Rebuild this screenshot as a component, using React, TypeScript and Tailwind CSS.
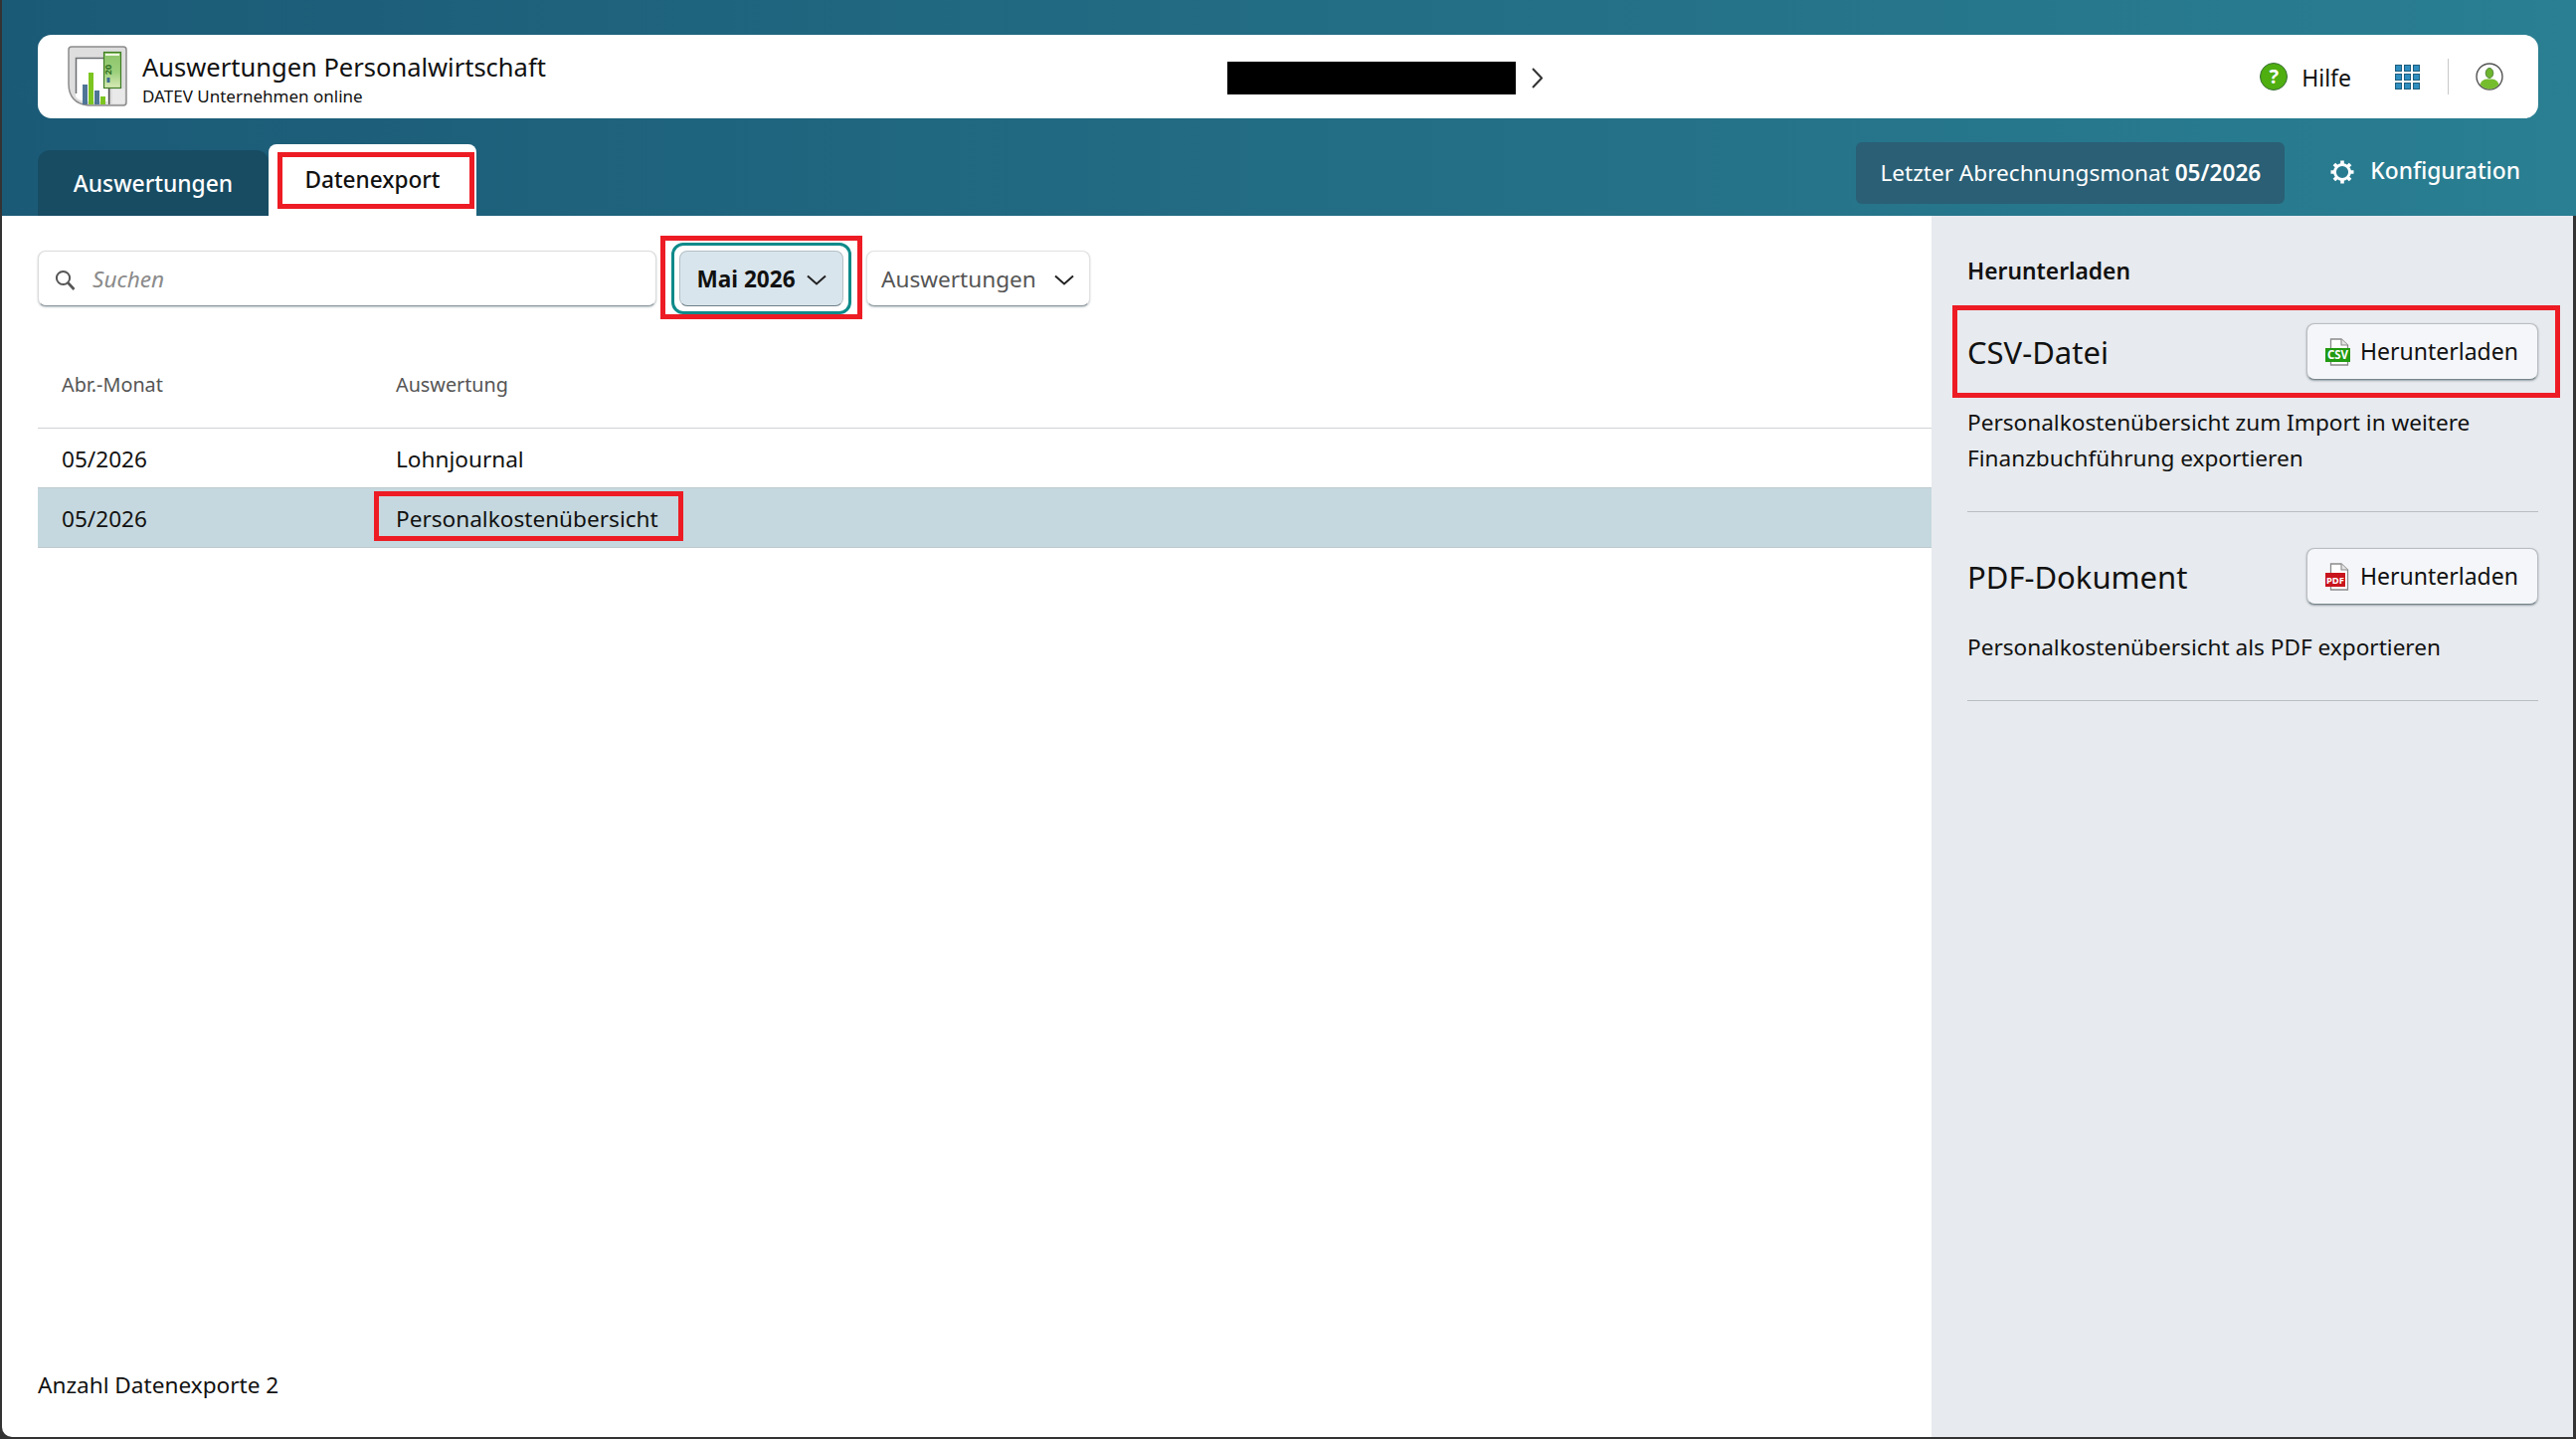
function AppLogo() {
  return (
    <svg viewBox="0 0 62 62" className="w-[62px] h-[62px] shrink-0">
      <defs>
        <linearGradient id="noteFill" x1="0" y1="0" x2="0" y2="1">
          <stop offset="0" stopColor="#8cc46a" />
          <stop offset="0.55" stopColor="#9ccf7a" />
          <stop offset="1" stopColor="#d8eab8" />
        </linearGradient>
      </defs>
      <path d="M4 1 H56 Q59 1 59 4 V57 Q59 60 56 60 H21 Q1 58 1 38 V4 Q1 1 4 1 Z" fill="#dedede" stroke="#8c8c8c" strokeWidth="1.5" />
      <path d="M8 50 V12 H40 V56 H20 Q8 55 8 50 Z" fill="#ffffff" />
      <path d="M8.5 48 V12.5 H38" fill="none" stroke="#6b6f72" strokeWidth="1.5" />
      <rect x="45" y="43" width="12" height="15" fill="#e9e9e9" />
      <rect x="15" y="39" width="5" height="20" fill="#4f7596" />
      <rect x="21" y="27" width="5" height="32" fill="#7cc520" />
      <rect x="27" y="45" width="5" height="14" fill="#4f7596" />
      <rect x="33" y="51" width="5" height="8" fill="#7cc520" />
      <rect x="41" y="42" width="1.5" height="17" fill="#555" />
      <rect x="36.5" y="6.5" width="17" height="36" fill="url(#noteFill)" stroke="#3f7d25" strokeWidth="1.2" />
      <rect x="38" y="8" width="14" height="2" fill="#eef6e2" />
      <text x="0" y="0" transform="translate(44 24) rotate(-90)" fontSize="9" fontWeight="700" fill="#2f6f1f" textAnchor="middle" fontFamily="Noto Sans, sans-serif">20</text>
      <rect x="39.5" y="32" width="3" height="5" fill="#3d6a92" />
    </svg>
  )
}

function HelpIcon() {
  return (
    <span className="w-7 h-7 rounded-full bg-[#4fae10] border border-[#3b6e3a] flex items-center justify-center text-white text-[20px] leading-none font-bold">?</span>
  )
}

function AppsIcon() {
  const cells = [0, 9, 18].flatMap((y) => [0, 9, 18].map((x) => [x, y]))
  return (
    <svg viewBox="0 0 25 25" className="w-[25px] h-[25px]">
      {cells.map(([x, y]) => (
        <rect key={`${x}-${y}`} x={x + 0.5} y={y + 0.5} width="6" height="6" fill="#2f8ec0" stroke="#1d5e7e" />
      ))}
    </svg>
  )
}

function UserIcon() {
  return (
    <svg viewBox="0 0 28 28" className="w-7 h-7">
      <circle cx="14" cy="14" r="13" fill="#fff" stroke="#555" strokeWidth="1.4" />
      <ellipse cx="14" cy="10.5" rx="3.8" ry="5" fill="#6db52e" stroke="#3f6e2a" strokeWidth="0.8" />
      <path d="M4.5 22 Q6 17 11 16.5 H17 Q22 17 23.5 22 Q19.5 26.5 14 26.5 Q8.5 26.5 4.5 22 Z" fill="#76bd2e" />
    </svg>
  )
}

function GearIcon() {
  return (
    <svg viewBox="0 0 24 24" className="w-6 h-6 text-white" fill="none" stroke="currentColor">
      <circle cx="12" cy="12" r="7.5" strokeWidth="2.8" />
      <path d="M12 0.5V5M12 19V23.5M0.5 12H5M19 12H23.5M3.9 3.9L7 7M17 17L20.1 20.1M3.9 20.1L7 17M17 7L20.1 3.9" strokeWidth="3.6" />
    </svg>
  )
}

function SearchIcon() {
  return (
    <svg viewBox="0 0 21 21" className="w-[21px] h-[21px] text-[#555]" fill="none" stroke="currentColor">
      <circle cx="8.5" cy="8.5" r="6.6" strokeWidth="2" />
      <path d="M13.5 13.5L19.5 20" strokeWidth="2.6" />
    </svg>
  )
}

function Chevron() {
  return (
    <svg viewBox="0 0 20 11" className="w-5 h-[11px] text-[#222]" fill="none" stroke="currentColor" strokeWidth="2">
      <path d="M1 1.5L10 9.5L19 1.5" />
    </svg>
  )
}

function FileIcon({ label, color, band, size }: { label: string; color: string; band: number; size: number }) {
  return (
    <svg viewBox="0 0 25 28" className="w-[25px] h-7 shrink-0">
      <path d="M5.5 1H16L22.5 7V27H5.5Z" fill="#fff" stroke="#8a8a8a" strokeWidth="1.3" />
      <path d="M16 1V7H22.5" fill="#e4e4e4" stroke="#8a8a8a" strokeWidth="1.1" />
      <rect x="0" y="10" width={band} height="14" fill={color} />
      <text x={band / 2} y="21" fontSize={size} fontWeight="700" fill="#fff" textAnchor="middle" fontFamily="Noto Sans, sans-serif">{label}</text>
    </svg>
  )
}

function DownloadButton({ label, color, band, size }: { label: string; color: string; band: number; size: number }) {
  return (
    <button className="w-[233px] h-[57px] shrink-0 flex items-center gap-[10px] pl-[18px] rounded-lg border border-[#b9bdc1] border-b-[#77858b] bg-[#f5f6f9] shadow-[0_1px_2px_rgba(70,90,100,0.5)] text-[23px] text-[#111]">
      <FileIcon label={label} color={color} band={band} size={size} />
      Herunterladen
    </button>
  )
}

function DownloadSection({ title, label, color, band, size, marked, children }: { title: string; label: string; color: string; band: number; size: number; marked?: boolean; children: React.ReactNode }) {
  return (
    <section className="mt-9 border-b border-[#b9bec2] pb-[35px]">
      <div className="relative flex items-center justify-between">
        <h3 className="text-[31px] leading-[44px] text-[#111]">{title}</h3>
        <DownloadButton label={label} color={color} band={band} size={size} />
        {marked && <span className="absolute -left-[15px] -right-[22px] -top-[18px] -bottom-[18px] border-[5px] border-[#ed1c24] pointer-events-none" />}
      </div>
      <p className="mt-[25px] text-[22.6px] leading-9 text-[#111]">{children}</p>
    </section>
  )
}

export default function App() {
  return (
    <div className="w-[2590px] h-[1447px] flex flex-col overflow-hidden bg-[#333] pl-0.5 pb-0.5 font-['Noto_Sans',sans-serif]">
      <header className="h-[217px] shrink-0 bg-gradient-to-r from-[#1b5a76] to-[#2a7f92] pl-9 pr-[38px] pt-[35px]">
        <div className="h-[84px] rounded-[14px] bg-white flex items-center">
          <div className="w-[1196px] shrink-0 flex items-center gap-[13px] pl-[30px]">
            <AppLogo />
            <div className="pt-0.5 text-[#111]">
              <div className="text-[25.5px] leading-[37px]">Auswertungen Personalwirtschaft</div>
              <div className="text-[17px] leading-[22px]">DATEV Unternehmen online</div>
            </div>
          </div>
          <div className="w-[290px] h-[33px] mt-[3px] bg-black" />
          <svg viewBox="0 0 11 21" className="ml-4 mt-[3px] w-[11px] h-[21px] text-[#333]" fill="none" stroke="currentColor" strokeWidth="2">
            <path d="M1 1L10 10.5L1 20" />
          </svg>
          <div className="ml-auto pr-[35px] flex items-center">
            <HelpIcon />
            <span className="ml-[14px] pt-0.5 text-[23px] text-[#111]">Hilfe</span>
            <span className="ml-[44px]"><AppsIcon /></span>
            <span className="ml-7 w-px h-9 bg-[#c8c8c8]" />
            <span className="ml-[27px]"><UserIcon /></span>
          </div>
        </div>
        <div className="h-[98px] flex justify-between">
          <nav className="flex items-end">
            <a className="w-[232px] h-[66px] pt-0.5 rounded-t-xl bg-[#174c63] flex items-center justify-center text-white text-[22.8px] font-medium">Auswertungen</a>
            <a className="relative w-[209px] h-[72px] rounded-t-lg bg-white flex items-center justify-center text-[#111] text-[22.6px] font-medium">
              Datenexport
              <span className="absolute left-[9px] right-[2px] top-2 bottom-[7px] border-[5px] border-[#ed1c24] pointer-events-none" />
            </a>
          </nav>
          <div className="mt-6 h-[62px] flex items-center">
            <div className="w-[431px] h-full rounded-md bg-[#2a5f75] flex items-center justify-center text-white text-[22.6px]">
              Letzter Abrechnungsmonat&nbsp;<b className="font-semibold">05/2026</b>
            </div>
            <div className="ml-[46px] flex items-center gap-4 text-white text-[22.8px] font-medium pr-[18px] -mt-[3px]">
              <GearIcon />
              Konfiguration
            </div>
          </div>
        </div>
      </header>

      <div className="flex-1 flex min-h-0">
        <main className="w-[1940px] shrink-0 bg-white flex flex-col rounded-bl-[10px]">
          <div className="pl-9 pt-[35px] flex gap-[23px]">
            <div className="w-[622px] h-14 pt-0.5 flex items-center gap-[17px] pl-4 rounded-lg bg-white border border-[#dcdcdc] border-b-[#8b979c] shadow-[0_1px_2px_rgba(70,90,100,0.35)]">
              <SearchIcon />
              <span className="text-[22.6px] italic text-[#8a8a8a]">Suchen</span>
            </div>
            <div className="relative w-[165px] h-14 pt-0.5 rounded-lg bg-[#d9e5ec] border border-[#b3c0c7] border-b-[#6c7e86] flex items-center justify-center gap-[11px] text-[22.6px] font-bold text-[#111]">
              Mai 2026
              <Chevron />
              <span className="absolute -left-[9px] -right-[9px] -top-[9px] -bottom-[9px] rounded-xl border-[3px] border-[#0f8a8a] pointer-events-none" />
              <span className="absolute -left-5 -right-5 -top-4 -bottom-3.5 border-[5px] border-[#ed1c24] pointer-events-none" />
            </div>
            <div className="w-[225px] h-14 pt-0.5 rounded-lg bg-white border border-[#e2e2e2] border-b-[#8b979c] shadow-[0_1px_2px_rgba(70,90,100,0.35)] flex items-center justify-between pl-[14px] pr-[15px] text-[22.6px] text-[#555]">
              Auswertungen
              <Chevron />
            </div>
          </div>

          <div className="mt-9 ml-9">
            <div className="h-[87px] flex items-center pl-6 border-b border-[#cfd2d4] text-[19.8px] text-[#555]">
              <div className="w-[336px]">Abr.-Monat</div>
              <div>Auswertung</div>
            </div>
            <div className="h-[59px] pt-0.5 flex items-center pl-6 text-[22.6px] text-[#111]">
              <div className="w-[336px]">05/2026</div>
              <div>Lohnjournal</div>
            </div>
            <div className="h-[61px] pt-0.5 flex items-center pl-6 bg-[#c6d8df] border-y border-[#bcc9cf] text-[22.6px] text-[#111]">
              <div className="w-[336px]">05/2026</div>
              <div className="relative">
                Personalkostenübersicht
                <span className="absolute -left-[22px] -right-[25px] -top-[11px] -bottom-[6px] border-[5px] border-[#ed1c24] pointer-events-none" />
              </div>
            </div>
          </div>

          <div className="mt-auto pl-9 pb-[34px] text-[22.6px] leading-9 text-[#111]">Anzahl Datenexporte 2</div>
        </main>

        <aside className="flex-1 bg-[#e7eaee] pl-9 pr-[35px] pt-9 mr-[3px]">
          <h2 className="h-9 pt-0.5 text-[22.8px] leading-9 font-semibold text-[#111]">Herunterladen</h2>
          <DownloadSection title="CSV-Datei" label="CSV" color="#229a12" band={25} size={11.5} marked>
            Personalkostenübersicht zum Import in weitere Finanzbuchführung exportieren
          </DownloadSection>
          <DownloadSection title="PDF-Dokument" label="PDF" color="#c8141c" band={20} size={9.5}>
            Personalkostenübersicht als PDF exportieren
          </DownloadSection>
        </aside>
      </div>
    </div>
  )
}
